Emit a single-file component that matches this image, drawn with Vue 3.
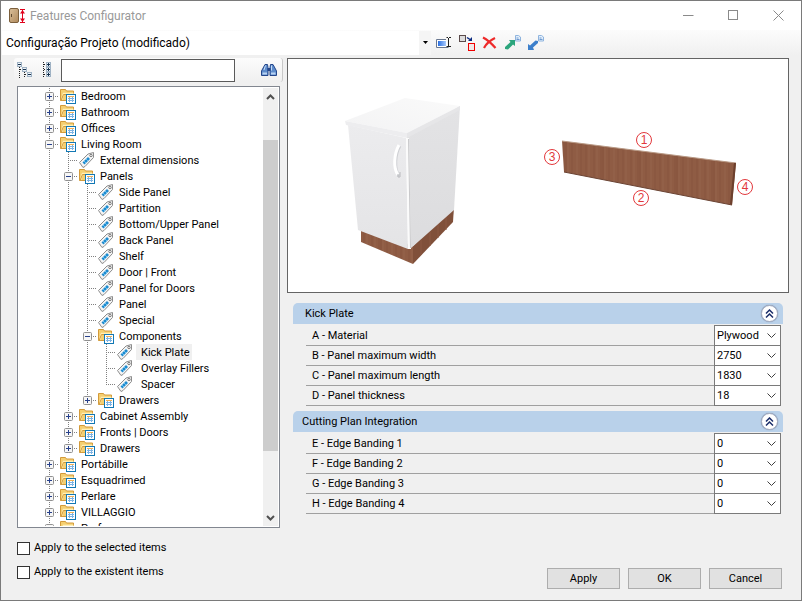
<script setup>
import { computed, reactive, ref } from 'vue'

const profile = ref('Configuração Projeto (modificado)')
const search = ref('')
const selected = ref('Kick Plate')
const applySelected = ref(false)
const applyExistent = ref(false)

const nodes = reactive([
  { level: 1, label: 'Bedroom', folder: true },
  { level: 1, label: 'Bathroom', folder: true },
  { level: 1, label: 'Offices', folder: true },
  { level: 1, label: 'Living Room', folder: true, open: true },
  { level: 2, label: 'External dimensions' },
  { level: 2, label: 'Panels', folder: true, open: true },
  { level: 3, label: 'Side Panel' },
  { level: 3, label: 'Partition' },
  { level: 3, label: 'Bottom/Upper Panel' },
  { level: 3, label: 'Back Panel' },
  { level: 3, label: 'Shelf' },
  { level: 3, label: 'Door | Front' },
  { level: 3, label: 'Panel for Doors' },
  { level: 3, label: 'Panel' },
  { level: 3, label: 'Special' },
  { level: 3, label: 'Components', folder: true, open: true },
  { level: 4, label: 'Kick Plate' },
  { level: 4, label: 'Overlay Fillers' },
  { level: 4, label: 'Spacer', last: true },
  { level: 3, label: 'Drawers', folder: true, last: true },
  { level: 2, label: 'Cabinet Assembly', folder: true },
  { level: 2, label: 'Fronts | Doors', folder: true },
  { level: 2, label: 'Drawers', folder: true, last: true },
  { level: 1, label: 'Portábille', folder: true },
  { level: 1, label: 'Esquadrimed', folder: true },
  { level: 1, label: 'Perlare', folder: true },
  { level: 1, label: 'VILLAGGIO', folder: true },
  { level: 1, label: 'Perf', folder: true },
])

// Hide everything below a closed folder that has listed children
const visibleNodes = computed(() => {
  let closedAt = 99
  return nodes.filter((n) => {
    if (n.level > closedAt) return false
    closedAt = n.folder && !n.open ? n.level : 99
    return true
  })
})

const sections = reactive([
  {
    title: 'Kick Plate',
    open: true,
    wide: true,
    rows: [
      { id: 'a', label: 'A - Material', value: 'Plywood', options: ['Plywood', 'MDF'] },
      { id: 'b', label: 'B - Panel maximum width', value: '2750', options: ['2750', '1830'] },
      { id: 'c', label: 'C - Panel maximum length', value: '1830', options: ['1830', '2750'] },
      { id: 'd', label: 'D - Panel thickness', value: '18', options: ['15', '18', '25'] },
    ],
  },
  {
    title: 'Cutting Plan Integration',
    open: true,
    rows: [
      { id: 'e', label: 'E - Edge Banding 1', value: '0', options: ['0', '1'] },
      { id: 'f', label: 'F - Edge Banding 2', value: '0', options: ['0', '1'] },
      { id: 'g', label: 'G - Edge Banding 3', value: '0', options: ['0', '1'] },
      { id: 'h', label: 'H - Edge Banding 4', value: '0', options: ['0', '1'] },
    ],
  },
])

const marks = [
  { n: 1, x: 644, y: 140 },
  { n: 2, x: 641, y: 198 },
  { n: 3, x: 552, y: 157 },
  { n: 4, x: 745, y: 187 },
]

function expandAll(open) {
  nodes.forEach((n) => { if (n.folder) n.open = open })
}
</script>

<template>
  <div class="window">
    <header class="titlebar">
      <svg class="app-icon" width="18" height="16" viewBox="0 0 18 16">
        <defs>
          <linearGradient id="door" x1="0" y1="0" x2="1" y2="1">
            <stop offset="0" stop-color="#d9bf9a"/><stop offset="1" stop-color="#b08a5c"/>
          </linearGradient>
        </defs>
        <rect x="0.5" y="0.5" width="9" height="14" rx="1.5" fill="url(#door)" stroke="#7b5f3c"/>
        <rect x="2" y="6" width="1" height="3" fill="#5f4a30"/>
        <path d="M11 1.5h5M11 14.5h5M13.5 2v12" stroke="#e0001b" fill="none"/>
        <path d="M13.5 2l2.500 3.500h-5zM13.500 14l2.500-3.500h-5z" fill="#e0001b"/>
      </svg>
      <h1 class="title">Features Configurator</h1>
      <button type="button" class="win-btn" aria-label="Minimize">
        <svg width="11" height="11" viewBox="0 0 11 11"><path d="M0 5.500h10.500" stroke="#8a8a8a"/></svg>
      </button>
      <button type="button" class="win-btn" aria-label="Maximize">
        <svg width="11" height="11" viewBox="0 0 11 11"><rect x="0.5" y="0.5" width="9" height="9" fill="none" stroke="#8a8a8a"/></svg>
      </button>
      <button type="button" class="win-btn" aria-label="Close">
        <svg width="11" height="11" viewBox="0 0 11 11"><path d="M0.500 0.500l10 10M10.500 0.500l-10 10" stroke="#8a8a8a"/></svg>
      </button>
    </header>

    <div class="toolbar">
      <div class="profile">
        <select v-model="profile" class="profile-select" aria-label="Configuration">
          <option>Configuração Projeto (modificado)</option>
        </select>
        <span class="profile-arrow">
          <svg width="5" height="3" viewBox="0 0 5 3"><path d="M0 0h5L2.500 3z" fill="#000"/></svg>
        </span>
      </div>
      <div class="tools">
        <button type="button" class="tool-btn" aria-label="Rename">
          <svg width="16" height="16" viewBox="0 0 16 16">
            <defs>
              <linearGradient id="field"><stop offset="0" stop-color="#2a6fe0"/><stop offset="1" stop-color="#a9cbff"/></linearGradient>
            </defs>
            <path d="M10 4.500H0.500v8h12" fill="#fff" stroke="#6a7890"/>
            <rect x="2" y="6" width="8" height="5" fill="url(#field)"/>
            <path d="M12.500 3v9M10.500 2.500h1.500M13 2.500h2M10.500 11.500h1.500M13 11.500h2" stroke="#222" fill="none"/>
          </svg>
        </button>
        <button type="button" class="tool-btn" aria-label="Replace">
          <svg width="16" height="16" viewBox="0 0 16 16">
            <rect x="0.500" y="0.500" width="6" height="6" fill="#ddd" stroke="#5a4a4a"/>
            <rect x="9.500" y="8.500" width="6" height="7" fill="#f0e8e8" stroke="#f00000"/>
            <path d="M8 2.500l3 2" stroke="#0b2a80" stroke-width="1.500"/><path d="M13 2v4H9z" fill="#0b2a80"/>
          </svg>
        </button>
        <button type="button" class="tool-btn" aria-label="Delete">
          <svg width="16" height="16" viewBox="0 0 16 16">
            <path d="M1 2.500C4 4 10 9 13.500 13M13 3C9 5 4 9 2 13" fill="none" stroke="#ee2a2a" stroke-width="2.200"/>
          </svg>
        </button>
        <button type="button" class="tool-btn" aria-label="Export">
          <svg width="16" height="16" viewBox="0 0 16 16">
            <path d="M4 5h6v6L8 9.500 3 14.500 0 14v-2l5.500-5z" fill="#2ba57c"/>
            <path d="M10.500 0.500h3l2 1.500v4h-5z" fill="#e4effb" stroke="#8fb4de"/><path d="M11.500 3h2M11.500 4.500h3" stroke="#6f9bd1"/>
          </svg>
        </button>
        <button type="button" class="tool-btn" aria-label="Import">
          <svg width="16" height="16" viewBox="0 0 16 16">
            <path d="M0 15V9l2 1.500L7.500 5.500 10 6v2l-5 4.500L6 15z" fill="#3c7fcb"/>
            <path d="M10.500 0.500h3l2 1.500v4h-5z" fill="#e4effb" stroke="#8fb4de"/><path d="M11.500 3h2M11.500 4.500h3" stroke="#6f9bd1"/>
          </svg>
        </button>
      </div>
    </div>

    <main class="content">
      <aside class="sidebar">
        <div class="search-bar">
          <button type="button" class="tree-btn" aria-label="Collapse all" @click="expandAll(false)">
            <svg width="16" height="16" viewBox="0 0 16 16">
              <path d="M2.500 5v11M7.500 10v5" stroke="#222" stroke-dasharray="1 1" fill="none"/>
              <path d="M3 7.500h3M8 12.500h3" stroke="#222" stroke-dasharray="1 1"/>
              <g fill="#eef3f8" stroke="#9fb2c4">
                <rect x="0.500" y="0.500" width="4" height="4"/><rect x="5.500" y="5.500" width="4" height="4"/><rect x="10.500" y="10.500" width="4" height="4"/>
              </g>
              <path d="M1 2.500h3M6 7.500h3M11 12.500h3" stroke="#16324f"/>
            </svg>
          </button>
          <button type="button" class="tree-btn" aria-label="Expand all" @click="expandAll(true)">
            <svg width="8" height="16" viewBox="0 0 8 16">
              <path d="M0.500 0v16" stroke="#222" stroke-dasharray="1 1"/>
              <path d="M1 2.500h2M1 7.500h2M1 12.500h2" stroke="#222" stroke-dasharray="1 1"/>
              <g fill="#eef3f8" stroke="#9fb2c4">
                <rect x="3.500" y="0.500" width="4" height="4"/><rect x="3.500" y="5.500" width="4" height="4"/><rect x="3.500" y="10.500" width="4" height="4"/>
              </g>
              <path d="M4 2.500h3M4 7.500h3M4 12.500h3M5.500 1v3M5.500 6v3M5.500 11v3" stroke="#16324f"/>
            </svg>
          </button>
          <input v-model="search" class="search-input" type="text" aria-label="Search"/>
          <button type="button" class="find-btn" aria-label="Find">
            <svg width="16" height="14" viewBox="0 0 16 14">
              <path d="M4 1.500h2.500l0.500 3v8H0.500V8zM12 1.500H9.500l-0.500 3v8h6.500V8z" fill="#5d8ccc" stroke="#24468a"/>
              <path d="M4.500 2.500L3 7M10.500 2.500v5" stroke="#c6dcf6"/>
              <path d="M1.500 10.500H6M10 10.500h4.500" stroke="#b8d2f2" stroke-width="2"/>
              <rect x="6.500" y="5" width="3" height="3" fill="#24468a"/>
            </svg>
          </button>
        </div>

        <div class="tree-box">
          <ul class="tree">
            <li v-for="(node, index) in visibleNodes" :key="index" class="tree-row">
              <span v-for="n in node.level - 1" :key="n" class="cell cell-through"></span>
              <span class="cell cell-branch" :class="{ 'cell-last': node.last }">
                <button v-if="node.folder" type="button" class="expander" :aria-label="node.open ? 'Collapse' : 'Expand'" @click="node.open = !node.open">
                  <svg width="9" height="9" viewBox="0 0 9 9">
                    <rect x="0.500" y="0.500" width="8" height="8" rx="1" fill="#f6f6f6" stroke="#919191"/>
                    <path d="M2 4.500h5" stroke="#27408b"/>
                    <path v-if="!node.open" d="M4.500 2v5" stroke="#27408b"/>
                  </svg>
                </button>
              </span>
              <svg v-if="node.folder" class="node-icon" width="18" height="16" viewBox="0 0 18 16">
                <path d="M1.500 12.500v-11h5l1 1.500h7v9.500z" fill="#f5cf70" stroke="#d39a3a"/>
                <path d="M2.500 12l2-6.500h10" fill="none" stroke="#fff0b8" stroke-width="1.500"/>
                <path d="M2 12.500l2.500-6h3" fill="none" stroke="#d39a3a"/>
                <rect x="7.500" y="6.500" width="9" height="9" fill="#fff" stroke="#1278b4"/>
                <path d="M9 8.500h6" stroke="#f0b055"/>
                <path d="M9 10.500h6M9 12.500h6M10.500 9v5M13.500 9v5" stroke="#7db4e4"/>
              </svg>
              <svg v-else class="node-icon" width="18" height="16" viewBox="0 0 18 16">
                <path d="M1.500 10.500L10 2l5.500-1.500v5L7 14.500l-2 1z" fill="#f4f4f4" stroke="#8c8c8c"/>
                <path d="M4.500 10.500l5.500-5.500 2 2-5.500 5.500z" fill="#1d8bd0"/>
                <path d="M6 9l2 2M8 7l2 2" stroke="#6cc0ee"/>
                <circle cx="13" cy="3.500" r="1.200" fill="#fff" stroke="#777"/>
              </svg>
              <button
                type="button"
                class="node-label"
                :class="{ selected: selected === node.label, deep: node.level === 4 }"
                @click="selected = node.label"
              >{{ node.label }}</button>
            </li>
          </ul>
          <div class="scrollbar">
            <svg class="scroll-arrow" width="15" height="17" viewBox="0 0 15 17"><path d="M4 11l3.500-3.500L11 11" fill="none" stroke="#505050" stroke-width="2"/></svg>
            <div class="scroll-track">
              <div class="scroll-thumb"></div>
            </div>
            <svg class="scroll-arrow" width="15" height="17" viewBox="0 0 15 17"><path d="M4 7l3.500 3.500L11 7" fill="none" stroke="#505050" stroke-width="2"/></svg>
          </div>
        </div>
      </aside>

      <section class="details">
        <div class="preview">
          <svg class="preview-art" viewBox="288 59 500 233">
            <defs>
              <linearGradient id="top" x1="0" y1="1" x2="1" y2="0">
                <stop offset="0" stop-color="#f3f3f4"/><stop offset="1" stop-color="#fafafa"/>
              </linearGradient>
              <linearGradient id="front" x1="0" y1="0" x2="0" y2="1">
                <stop offset="0" stop-color="#ececee"/><stop offset="1" stop-color="#e4e4e6"/>
              </linearGradient>
              <linearGradient id="side" x1="0" y1="0" x2="0" y2="1">
                <stop offset="0" stop-color="#e3e3e5"/><stop offset="1" stop-color="#dcdcde"/>
              </linearGradient>
              <pattern id="grain" width="37" height="90" patternUnits="userSpaceOnUse">
                <rect width="37" height="90" fill="#8f5c44"/>
                <path d="M2 0v90M9 0v90M17 0v90M26 0v90M31 0v90" stroke="#87543e" stroke-width="1"/>
                <path d="M5 0v90M13 0v90M22 0v90M34 0v90" stroke="#95634b" stroke-width="1"/>
                <path d="M11 0v90" stroke="#8a5740" stroke-width="2"/>
              </pattern>
            </defs>

            <polygon points="361,229 413,246 413,264 361,242" fill="url(#grain)"/>
            <polygon points="413,246 454,207 453,222 413,264" fill="#80503a"/>
            <path d="M421 240v15M430 232v14M438 224v14M446 216v14" stroke="#8b5942"/>
            <polygon points="407,137 460,106 454,210 410,249" fill="url(#side)"/>
            <polygon points="348,125 406,138 408,249 358,230" fill="url(#front)"/>
            <path d="M407.500 138L409.500 249" stroke="#fbfbfb" stroke-width="3"/>
            <path d="M408.500 139L410.500 248" stroke="#c9c9cb" stroke-width="1"/>
            <polygon points="345,121 405,98 460,106 407,133" fill="url(#top)"/>
            <polygon points="345,121 407,133 407,138 346,125" fill="#ededef"/>
            <polygon points="407,133 460,106 460,110 407,138" fill="#e6e6e8"/>
            <path d="M400 146C395 154 394 169 399 176" fill="none" stroke="#cfd0d4" stroke-width="3"/>
            <path d="M399 145C394 154 393 168 398 175" fill="none" stroke="#fff" stroke-width="3"/>
            <path d="M398 174v3h2v-5" fill="none" stroke="#b9babe"/>

            <polygon points="562,141 736,163 732,205 564,172" fill="url(#grain)"/>
            <path d="M562 141l174 22" stroke="#b99a86" stroke-width="1"/>
            <path d="M564 172l168 33" stroke="#6b4434" stroke-width="1"/>
            <polygon points="734,163 736,163 732,205 730,204" fill="#6d402d"/>

            <g v-for="mark in marks" :key="mark.n">
              <circle :cx="mark.x" :cy="mark.y" r="7.500" fill="#fff" stroke="#e2383c"/>
              <text class="mark" :x="mark.x" :y="mark.y + 4" text-anchor="middle">{{ mark.n }}</text>
            </g>
          </svg>
        </div>

        <div class="properties">
          <section v-for="section in sections" :key="section.title" class="group">
            <header class="group-header" :class="{ wide: section.wide }">
              <h2 class="group-title">{{ section.title }}</h2>
              <button type="button" class="collapse-btn" aria-label="Toggle section" @click="section.open = !section.open">
                <svg width="9" height="9" viewBox="0 0 9 9"><path d="M1 4.500L4.500 1 8 4.500M1 8.500L4.500 5 8 8.500" fill="none" stroke="#1c2f6b" stroke-width="1.500"/></svg>
              </button>
            </header>
            <template v-if="section.open">
              <div v-for="row in section.rows" :key="row.id" class="prop-row">
                <label class="prop-label" :for="`prop-${row.id}`">{{ row.label }}</label>
                <div class="combo">
                  <select :id="`prop-${row.id}`" v-model="row.value" class="combo-select">
                    <option v-for="opt in row.options" :key="opt">{{ opt }}</option>
                  </select>
                  <svg class="combo-arrow" width="9" height="5" viewBox="0 0 9 5"><path d="M0.500 0.500l4 4 4-4" fill="none" stroke="#404040"/></svg>
                </div>
              </div>
            </template>
          </section>
        </div>
      </section>
    </main>

    <footer class="footer">
      <div class="checks">
        <label class="check"><input v-model="applySelected" type="checkbox" class="check-box"/>Apply to the selected items</label>
        <label class="check"><input v-model="applyExistent" type="checkbox" class="check-box"/>Apply to the existent items</label>
      </div>
      <div class="actions">
        <button type="button" class="btn">Apply</button>
        <button type="button" class="btn">OK</button>
        <button type="button" class="btn">Cancel</button>
      </div>
    </footer>
  </div>
</template>

<style>
body { margin: 0; }
</style>

<style scoped>
.window {
  display: flex;
  flex-direction: column;
  box-sizing: border-box;
  height: 100vh;
  border: 1px solid #7a7a7a;
  background: #f0f0f0;
  color: #000;
  font-family: Roboto, 'Liberation Sans', sans-serif;
  font-size: 11px;
  line-height: 16px;
}

button, input, select {
  box-sizing: border-box;
  margin: 0;
  padding: 0;
  font: inherit;
  color: inherit;
}
button { border: none; background: transparent; }
svg { display: block; }

/* Title bar */
.titlebar {
  display: flex;
  align-items: center;
  height: 29px;
  flex: none;
  padding-left: 8px;
  background: #fff;
}
.title {
  flex: 1;
  margin: 0 0 0 3px;
  font-size: 12px;
  font-weight: 400;
  color: #999;
}
.win-btn {
  display: flex;
  align-items: center;
  justify-content: center;
  width: 45px;
  height: 29px;
}

/* Toolbar */
.toolbar {
  display: flex;
  align-items: center;
  gap: 5px;
  flex: none;
  height: 25px;
  padding-left: 1px;
  background: linear-gradient(#fcfcfc, #f0f0f0);
}
.profile {
  display: grid;
  grid-template-columns: 1fr 12px;
  width: 429px;
  height: 24px;
  background: #fff;
}
.profile-select {
  grid-area: 1 / 1 / 2 / 3;
  appearance: none;
  padding-left: 4px;
  border: none;
  background: transparent;
  font-size: 12px;
}
.profile-arrow {
  grid-area: 1 / 2;
  display: flex;
  align-items: center;
  justify-content: center;
  background: #f5f5f5;
  pointer-events: none;
}
.tools { display: flex; gap: 7px; }
.tool-btn { flex: none; }

/* Main area */
.content {
  display: flex;
  flex: 1;
  min-height: 0;
  gap: 4px;
  padding: 3px 12px 0 13px;
}
.sidebar {
  display: flex;
  flex-direction: column;
  width: 269px;
  flex: none;
}
.search-bar {
  display: flex;
  align-items: center;
  flex: none;
  height: 24px;
  padding: 0 5px 0 3px;
  border-right: 1px solid #c8c8c8;
  border-radius: 3px;
  background: linear-gradient(#fcfcfc, #f0f0f0);
}
.tree-btn { margin-right: 10px; }
.search-input {
  width: 174px;
  height: 23px;
  padding: 0 4px;
  border: 1px solid #5a5a5a;
  background: #fff;
  outline: none;
}
.find-btn { margin-left: auto; }

.tree-box {
  display: flex;
  flex: 1;
  min-height: 0;
  margin: 4px 3px 0;
  padding: 1px;
  border: 1px solid #828790;
  background: #fff;
}
.tree {
  flex: 1;
  margin: 0;
  padding: 0 0 0 21px;
  list-style: none;
  overflow: hidden;
}
.tree-row { display: flex; height: 16px; }
.cell {
  display: flex;
  align-items: flex-end;
  justify-content: center;
  flex: none;
  box-sizing: border-box;
  width: 19px;
  padding-bottom: 3px;
  background-repeat: no-repeat;
}
.cell-through {
  background-image: repeating-linear-gradient(#808080 0 1px, transparent 1px 2px);
  background-position: 9px 0;
  background-size: 1px 16px;
}
.cell-branch {
  background-image:
    repeating-linear-gradient(#808080 0 1px, transparent 1px 2px),
    repeating-linear-gradient(90deg, #808080 0 1px, transparent 1px 2px);
  background-position: 9px 0, 9px 8px;
  background-size: 1px 16px, 10px 1px;
}
.cell-last { background-size: 1px 8px, 10px 1px; }
.expander { height: 9px; }
.node-icon { flex: none; }
.node-label {
  margin-left: 2px;
  padding: 1px 2px 0;
  line-height: 15px;
  white-space: nowrap;
}
.node-label.deep { padding-left: 5px; }
.node-label.selected { background: #f0f0f0; }

.scrollbar {
  display: flex;
  flex-direction: column;
  flex: none;
  width: 15px;
  background: #f0f0f0;
}
.scroll-arrow { flex: none; }
.scroll-track {
  display: flex;
  flex-direction: column;
  flex: 1;
}
.scroll-track::before { content: ''; flex: 35; }
.scroll-track::after { content: ''; flex: 58; }
.scroll-thumb { flex: 312; background: #cdcdcd; }

/* Preview and properties */
.details { flex: 1; min-width: 0; }
.preview {
  border: 1px solid #646464;
  background: #fff;
}
.preview-art { width: 100%; height: auto; }
.mark {
  font-family: 'Liberation Sans', sans-serif;
  font-size: 12px;
  fill: #e2383c;
}
.properties { padding: 10px 6px 0; }
.group { margin-bottom: 5px; }
.group-header {
  display: flex;
  align-items: center;
  justify-content: space-between;
  height: 21px;
  margin-bottom: 2px;
  padding: 0 5px 0 9px;
  border-radius: 5px 5px 0 0;
  background: #b9d1ea;
}
.group-header.wide { padding-left: 12px; }
.group-title { margin: 0; font-size: 11px; font-weight: 400; }
.collapse-btn {
  display: flex;
  align-items: center;
  justify-content: center;
  width: 17px;
  height: 17px;
  border: 1px solid #a3adc2;
  border-radius: 50%;
  background: #fff;
  box-shadow: 0 0 1px #6f7b95;
}
.prop-row {
  display: flex;
  height: 20px;
  margin: 0 2px 0 13px;
}
.prop-label {
  flex: 1;
  padding: 1px 0 0 6px;
  border-bottom: 1px solid #a0a0a0;
  line-height: 18px;
}
.combo {
  display: grid;
  align-items: center;
  width: 65px;
  margin-top: -1px;
  border: 1px solid #7a7a7a;
  background: #fff;
}
.combo-select {
  grid-area: 1 / 1;
  width: 100%;
  height: 19px;
  padding-left: 2px;
  border: none;
  background: transparent;
  appearance: none;
}
.combo-arrow {
  grid-area: 1 / 1;
  justify-self: end;
  margin-right: 4px;
  pointer-events: none;
}

/* Footer */
.footer {
  display: flex;
  align-items: flex-end;
  justify-content: space-between;
  flex: none;
  padding: 12px 19px 11px 16px;
}
.checks {
  display: flex;
  flex-direction: column;
  gap: 8px;
  padding-bottom: 9px;
}
.check { display: flex; align-items: center; gap: 4px; }
.check-box {
  appearance: none;
  width: 13px;
  height: 13px;
  border: 1px solid #333;
  background: #fff;
}
.check-box:checked { background: #333; }
.actions { display: flex; gap: 8px; }
.btn {
  width: 73px;
  height: 21px;
  border: 1px solid #adadad;
  background: #e1e1e1;
}
</style>
